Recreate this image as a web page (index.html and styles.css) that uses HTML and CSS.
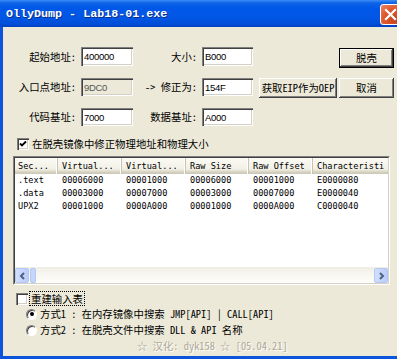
FILE: index.html
```html
<!DOCTYPE html>
<html>
<head>
<meta charset="utf-8">
<link rel="stylesheet" href="styles.css">
</head>
<body>
<div class="window">
  <div class="titlebar">
    <span class="title">OllyDump - Lab18-01.exe</span>
    <span class="close"><svg width="13" height="13" viewBox="0 0 13 13"><path d="M2 2 L11 11 M11 2 L2 11" stroke="#fff" stroke-width="2.2" stroke-linecap="square"/></svg></span>
  </div>
  <div class="frame">
    <div class="form">
      <div class="lbl">起始地址:</div>
      <div class="input">400000</div>
      <div class="lbl">大小:</div>
      <div class="input">B000</div>
      <div></div>
      <button class="btn default r1">脱壳</button>

      <div class="lbl">入口点地址:</div>
      <div class="input disabled">9DC0</div>
      <div class="lbl">-&gt; 修正为:</div>
      <div class="input">154F</div>
      <button class="btn wide">获取EIP作为OEP</button>
      <button class="btn">取消</button>

      <div class="lbl">代码基址:</div>
      <div class="input">7000</div>
      <div class="lbl">数据基址:</div>
      <div class="input">A000</div>
    </div>

    <div class="check-row">
      <span class="cb"><svg width="8" height="8" viewBox="0 0 8 8"><path d="M1 3.5 L3 5.5 L7 1.5" stroke="#000" stroke-width="1.8" fill="none"/></svg></span>
      <span>在脱壳镜像中修正物理地址和物理大小</span>
    </div>

    <div class="list">
      <div class="list-in">
        <div class="hdr">
          <div class="c c1">Sec...</div>
          <div class="c c2">Virtual...</div>
          <div class="c c3">Virtual...</div>
          <div class="c c4">Raw Size</div>
          <div class="c c5">Raw Offset</div>
          <div class="c c6">Characteristi</div>
        </div>
        <div class="rows">
          <div class="row"><div class="c c1">.text</div><div class="c c2">00006000</div><div class="c c3">00001000</div><div class="c c4">00006000</div><div class="c c5">00001000</div><div class="c c6">E0000080</div></div>
          <div class="row"><div class="c c1">.data</div><div class="c c2">00003000</div><div class="c c3">00007000</div><div class="c c4">00003000</div><div class="c c5">00007000</div><div class="c c6">E0000040</div></div>
          <div class="row"><div class="c c1">UPX2</div><div class="c c2">00001000</div><div class="c c3">0000A000</div><div class="c c4">00001000</div><div class="c c5">0000A000</div><div class="c c6">C0000040</div></div>
        </div>
        <div class="hscroll">
          <span class="sbtn"><svg width="7" height="8" viewBox="0 0 7 8"><path d="M5 1 L2 4 L5 7" stroke="#4D6185" stroke-width="2" fill="none"/></svg></span>
          <span class="thumb"></span>
          <span class="track"></span>
          <span class="sbtn"><svg width="7" height="8" viewBox="0 0 7 8"><path d="M2 1 L5 4 L2 7" stroke="#4D6185" stroke-width="2" fill="none"/></svg></span>
        </div>
      </div>
    </div>

    <div class="check-row2">
      <span class="cb"></span>
      <span class="focus">重建输入表</span>
    </div>
    <div class="radio-row">
      <span class="rb on"></span>
      <span>方式1 : 在内存镜像中搜索 JMP[API] | CALL[API]</span>
    </div>
    <div class="radio-row">
      <span class="rb"></span>
      <span>方式2 : 在脱壳文件中搜索 DLL &amp; API 名称</span>
    </div>
    <div class="footer">☆ 汉化: dyk158 ☆ [05.04.21]</div>
  </div>
</div>
</body>
</html>
```

FILE: styles.css
```css
* { box-sizing: border-box; }
html, body { margin: 0; padding: 0; }
body {
  width: 397px;
  height: 359px;
  overflow: hidden;
  background: #0A52D8;
  font-family: "Noto Sans Mono CJK SC", "Noto Sans CJK SC", sans-serif;
  font-size: 10.4px;
  line-height: 12px;
  color: #000;
}
.window {
  width: 397px;
  height: 359px;
  display: flex;
  flex-direction: column;
}
.titlebar {
  height: 27px;
  flex: none;
  display: flex;
  align-items: center;
  padding-left: 6px;
  overflow: hidden;
  background: linear-gradient(to bottom, #3C8EF5 0, #0E63E6 3px, #0058E8 8px, #0256E4 18px, #014ED8 24px, #0040C0 27px);
}
.title {
  font-family: "Liberation Mono", monospace;
  font-weight: bold;
  font-size: 11.7px;
  line-height: 14px;
  color: #fff;
  text-shadow: 1px 1px 0 #0B2E8C;
  margin-top: 1px;
}
.close {
  margin-left: auto;
  margin-right: -4px;
  margin-top: 2px;
  width: 21px;
  height: 21px;
  border: 1px solid #fff;
  border-radius: 3px;
  background: radial-gradient(circle at 70% 75%, #C8431E 0, #E0582E 55%, #EC8A6A 100%);
  display: flex;
  align-items: center;
  justify-content: center;
}
.frame {
  flex: 1;
  background: #ECE9D8;
  border-left: 3px solid #0A55DC;
  border-bottom: 3px solid #0A55DC;
  display: flex;
  flex-direction: column;
}
.form {
  display: grid;
  grid-template-columns: 78px 52px 69px 51px 84px 57px;
  grid-template-rows: 19px 18px 18px;
  row-gap: 12px;
  margin-top: 20px;
}
.lbl {
  display: flex;
  align-items: center;
  justify-content: flex-end;
  padding-right: 5px;
  white-space: nowrap;
}
.input {
  display: flex;
  align-items: center;
  padding-left: 3px;
  padding-top: 1px;
  background: #fff;
  font-family: "Liberation Sans", sans-serif;
  font-size: 9.5px;
  letter-spacing: -0.3px;
  box-shadow: inset 1px 1px #808080, inset 2px 2px #404040, inset -1px -1px #fff, inset -2px -2px #D4D0C8;
}
.input.disabled {
  background: #ECE9D8;
  color: #555;
}
.btn {
  font: inherit;
  color: #000;
  background: #ECE9D8;
  border: none;
  padding: 0;
  height: 20px;
  justify-self: end;
  width: 55px;
  white-space: nowrap;
  box-shadow: inset -1px -1px #404040, inset 1px 1px #fff, inset -2px -2px #808080, inset 2px 2px #ECE9D8;
}
.btn.wide { width: 78px; }
.btn.default {
  box-shadow: inset 0 0 0 1px #000, inset -2px -2px #404040, inset 2px 2px #fff, inset -3px -3px #808080;
}
.btn.r1 { margin-top: 1px; }
.check-row {
  display: flex;
  align-items: center;
  gap: 3px;
  margin-top: 11px;
  padding-left: 14px;
  height: 13px;
}
.cb {
  width: 12px;
  height: 12px;
  flex: none;
  background: #fff;
  display: flex;
  align-items: center;
  justify-content: center;
  box-shadow: inset 1px 1px #808080, inset 2px 2px #404040, inset -1px -1px #fff, inset -2px -2px #D4D0C8;
}
.list {
  margin: 6px 0 0 10px;
  width: 377px;
  height: 129px;
  border: 1px solid;
  border-color: #808080 #fff #fff #808080;
}
.list-in {
  height: 100%;
  border: 1px solid;
  border-color: #404040 #D4D0C8 #D4D0C8 #404040;
  background: #fff;
  display: flex;
  flex-direction: column;
  overflow: hidden;
  font-family: "DejaVu Sans Mono", "Liberation Mono", monospace;
  font-size: 8.6px;
}
.hdr {
  height: 16px;
  flex: none;
  display: flex;
  background: linear-gradient(to bottom, #FBFAF4 0, #F2F0E6 11px, #E2DECD 13px, #D6D2C2 14px, #CBC7B8 16px);
}
.c {
  flex: none;
  white-space: nowrap;
  overflow: hidden;
  padding-left: 4px;
  display: flex;
  align-items: center;
  line-height: 11px;
}
.c1 { width: 43px; padding-left: 3px; }
.c2 { width: 64px; }
.c3 { width: 64px; }
.c4 { width: 63px; }
.c5 { width: 64px; }
.c6 { width: 80px; }
.hdr .c { border-right: 1px solid #C7C5B2; box-shadow: inset -1px 0 #fff; padding-top: 1px; }
.hdr .c6 { border-right: none; box-shadow: none; }
.rows { flex: 1; }
.row { display: flex; height: 13px; }
.row .c { height: 13px; }
.hscroll {
  height: 16px;
  flex: none;
  display: flex;
  align-items: center;
  background: linear-gradient(to bottom, #F1EFE6 0, #F7F6F0 6px, #FEFEFB 16px);
  border-top: 1px solid #EFEDE4;
}
.sbtn {
  width: 14px;
  height: 15px;
  flex: none;
  border: 1px solid #B4C8F6;
  border-radius: 2px;
  background: linear-gradient(to right, #D2DEFC, #BACDF9);
  display: flex;
  align-items: center;
  justify-content: center;
}
.thumb {
  width: 6px;
  height: 15px;
  margin-left: 1px;
  flex: none;
  border: 1px solid #B4C8F6;
  border-radius: 2px;
  background: #C6D6FB;
}
.track { flex: 1; }
.check-row2 {
  display: flex;
  align-items: center;
  gap: 2px;
  margin-top: 6px;
  padding-left: 13px;
  height: 15px;
}
.focus {
  outline: 1px dotted #000;
  outline-offset: 0;
  padding: 0 1px;
  line-height: 13px;
}
.radio-row {
  display: flex;
  align-items: center;
  gap: 3px;
  padding-left: 23px;
  height: 16px;
  white-space: nowrap;
}
.rb {
  width: 11px;
  height: 11px;
  border-radius: 50%;
  background: #fff;
  border: 1px solid;
  border-color: #808080 #fff #fff #808080;
  box-shadow: inset 1px 1px #404040;
  display: flex;
  align-items: center;
  justify-content: center;
  flex: none;
}
.rb.on::after {
  content: "";
  width: 4px;
  height: 4px;
  border-radius: 50%;
  background: #000;
}
.footer {
  height: 16px;
  display: flex;
  align-items: center;
  padding-left: 134px;
  color: #ACA899;
  text-shadow: 1px 1px 0 #fff;
  white-space: nowrap;
}
```
